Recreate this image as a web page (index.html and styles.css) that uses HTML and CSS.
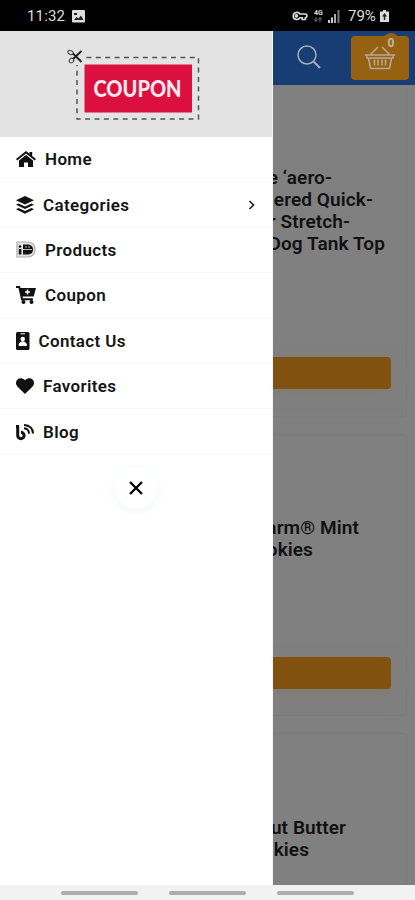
FILE: index.html
```html
<!DOCTYPE html>
<html lang="en">
<head>
<meta charset="utf-8">
<meta name="viewport" content="width=device-width, initial-scale=1">
<title>Coupon</title>
<link rel="stylesheet" href="styles.css">
</head>
<body>
<div class="phone">
  <header class="status">
    <span class="clock">11:32</span>
    <svg class="photo" width="13" height="13" viewBox="0 0 13 13"><rect width="13" height="12.5" rx="1" fill="#ddd"/><path d="M2 10l2.500-3 2 1.500L9 5.500l2.500 4.500zM2 3h3v2H2z" fill="#222"/></svg>
    <svg class="key" width="16" height="10" viewBox="0 0 16 10" fill="none" stroke="#ddd" stroke-width="1.600"><path d="M8 3C6.500.5 1.200.8 1.200 5S6.500 9.300 8 6.700h2.200V8.500h3.200V6.700c2 0 2-3.700 0-3.700z"/><circle cx="4.500" cy="4.900" r="1"/></svg>
    <span class="net"><b>4G</b><svg width="8" height="5" viewBox="0 0 8 5" stroke="#777" fill="none"><path d="M2 0v4M.5 2.500L2 4.500l1.500-2M6 5V1M4.500 2.500L6 .5l1.500 2"/></svg></span>
    <svg class="signal" width="12" height="13" viewBox="0 0 12 13"><path d="M0 10h2v3H0zM3 7.500h2V13H3z" fill="#ccc"/><path d="M6 4h2v9H6z" fill="#aaa"/><path d="M9.500 0h2v13h-2z" fill="#777"/></svg>
    <span class="percent">79%</span>
    <svg class="battery" width="9" height="12" viewBox="0 0 9 12"><path d="M3 0h3v1.500h3V12H0V1.500h3z" fill="#ddd"/><path d="M4.500 3L2 6.500h1.800V10h1.500V6.500H7z" fill="#222"/></svg>
  </header>
  <div class="screen">
    <aside class="drawer">
      <div class="brand">
        <svg width="136" height="76" viewBox="0 0 136 76">
          <rect x="13" y="11.500" width="121.500" height="61.500" fill="none" stroke="#555" stroke-width="1.500" stroke-dasharray="5 4.400"/>
          <rect x="2" y="2" width="17" height="17" fill="#e3e3e3"/>
          <g fill="none" stroke="#555" stroke-width="1.200"><ellipse cx="6.500" cy="6.500" rx="2.800" ry="1.900" transform="rotate(25 6.500 6.500)"/><ellipse cx="7.500" cy="14.500" rx="2.500" ry="2" transform="rotate(-50 7.500 14.500)"/><path d="M9 7.500l8.500 8.500M9 13L17.500 5" stroke="#222" stroke-width="2"/></g>
          <rect x="20.500" y="18.500" width="107.500" height="48" fill="#dc103f"/>
          <text x="29.500" y="50.500" textLength="88" lengthAdjust="spacingAndGlyphs">COUPON</text>
        </svg>
      </div>
      <nav>
        <a class="item"><svg width="20" height="17" viewBox="0 0 20 17"><path d="M0 8L10 0l3.500 2.800V1h2.700v4L20 8l-1.200 1.500L10 2.600 1.200 9.500z"/><path d="M10 4l7 5.600V16h-5v-4.500H8V16H3V9.600z"/></svg><span>Home</span></a>
        <a class="item"><svg width="18" height="18" viewBox="0 0 18 18"><path d="M9 0l9 4.300-9 4.200-9-4.200z"/><path d="M0 8.700l2.600-1.200L9 10.400l6.400-2.900L18 8.700 9 13z"/><path d="M0 13.300l2.600-1.200L9 15l6.400-2.900 2.600 1.200-9 4.400z"/></svg><span>Categories</span><svg class="chevron" width="7" height="10" viewBox="0 0 7 10"><path d="M1.500 1l4 4-4 4" fill="none" stroke="#222" stroke-width="1.700"/></svg></a>
        <a class="item"><svg width="20" height="17" viewBox="0 0 20 17"><path d="M1 1h10c5.500 0 8 3 8 7.500S16.500 16 11 16H1z" fill="#e4e4e4" stroke="#aaa" stroke-width="1.200"/><circle cx="4" cy="5.500" r="1.300"/><path d="M2.800 8h2.600v5.500H2.800zM7 3.500h4c4 0 6 2 6 5s-2 5-6 5H7z"/><path d="M7 8.500h9M10 5v2M13 5v2" stroke="#bbb"/></svg><span>Products</span></a>
        <a class="item"><svg width="20" height="18" viewBox="0 0 20 18"><path d="M0 0h4l.5 2H20l-2.300 8.500H6.500l.4 1.700h10v2H5.200L2.500 2H0z"/><circle cx="7.500" cy="16" r="2"/><circle cx="15.500" cy="16" r="2"/><path d="M11.500 3.500v5M9 6h5" stroke="#fff" stroke-width="1.500"/></svg><span>Coupon</span></a>
        <a class="item"><svg width="13.500" height="18" viewBox="0 0 13.500 18"><rect width="13.500" height="18" rx="1.500"/><path d="M4.500 1.800h4.500M3 13.500c0-5 7.500-5 7.500 0z" stroke="#fff" fill="#fff"/><circle cx="6.750" cy="7" r="2.300" fill="#fff"/></svg><span>Contact Us</span></a>
        <a class="item"><svg width="18" height="16" viewBox="0 0 18 16"><path d="M9 16L1.400 8.500C-2.800 4 3-3.200 9 2.200c6-5.400 11.800 1.800 7.600 6.300z"/></svg><span>Favorites</span></a>
        <a class="item"><svg width="18" height="18" viewBox="0 0 18 18" fill="none" stroke="#111"><path d="M0 3.500h1.700v9a3.200 3.200 0 1 0 3.200-3.200" stroke-width="3"/><path d="M8 5.200c3.500.3 5 2.500 5 5.500M8 2c5.500.3 8.800 3.500 9 8.500" stroke-width="2"/></svg><span>Blog</span></a>
      </nav>
      <button class="close" aria-label="Close"><svg width="14" height="14" viewBox="0 0 14 14"><path d="M1 1l12 12M13 1L1 13" stroke="#000" stroke-width="2.300"/></svg></button>
    </aside>
    <main class="page">
      <div class="topbar">
        <svg class="search" width="24" height="24" viewBox="0 0 24 24" fill="none" stroke="#a9adb5" stroke-width="1.500"><circle cx="10" cy="10" r="9"/><path d="M16.500 16.500L23 23" stroke-width="2"/></svg>
        <div class="cart"><svg width="30" height="24" viewBox="0 0 30 24" fill="none" stroke="#b5aa97" stroke-width="1.500"><path d="M0 9h30M2 9v3h26V9M3.500 12l2 10.500h19l2-10.500M5 9L13 1M25 9L17 1M9.500 13.500v6M13 13.500v6M17 13.500v6M20.500 13.500v6"/></svg><span class="badge">0</span></div>
      </div>
      <div class="products">
        <section class="card first"><h2><span class="a1">e ‘aero-</span><span class="a2">ered Quick-</span><span class="a3">r Stretch-</span><span class="a4">Dog Tank Top</span></h2><div class="buy"></div></section>
        <section class="card second"><h2><span class="b1">arm® Mint</span><span class="b2">okies</span></h2><div class="buy"></div></section>
        <section class="card third"><h2><span class="c1">ut Butter</span><span class="c2">kies</span></h2></section>
      </div>
    </main>
  </div>
  <footer class="gestures"><i></i><i></i><i></i></footer>
</div>
</body>
</html>
```
FILE: styles.css
```css
* { box-sizing: border-box; }
body { margin: 0; font-family: Roboto, sans-serif; color: #151515; }
svg { display: block; flex: none; }
.phone { width: 415px; height: 900px; display: flex; flex-direction: column; overflow: hidden; }
.status { height: 31px; flex: none; background: #000; color: #ddd; display: flex; align-items: center; padding: 1px 26px 0 27px; }
.clock { font-size: 15px; width: 38px; margin-right: 7px; letter-spacing: .15px; }
.key { margin-left: auto; }
.net { margin-left: 6px; width: 9px; font: 7px/7px Roboto, sans-serif; }
.net b { display: block; }
.signal { margin-left: 5px; }
.percent { margin-left: 8px; font-size: 15px; width: 29px; }
.battery { margin-left: 3px; }
.screen { flex: 1; display: flex; min-height: 0; }
.drawer { width: 273px; flex: none; background: #fff; display: flex; flex-direction: column; border-right: 1px solid #f5f5f5; }
.brand { height: 106px; background: #e3e3e3; padding: 15px 0 0 64px; }
.brand text { font: 900 22px Lato, sans-serif; fill: #fbe8ec; }
nav { display: flex; flex-direction: column; }
.item { height: 45.4px; display: flex; align-items: center; gap: 9px; padding: 0 17px 0 16px; border-bottom: 1px solid #f9f9f9; font-size: 17px; font-weight: 600; fill: #111; }
.item span { letter-spacing: .35px; }
.chevron { margin-left: auto; }
.close { width: 42px; height: 42px; border: 0; padding: 0; border-radius: 50%; background: #fff; box-shadow: 0 2px 12px #f0f6f6; display: grid; place-items: center; margin: 12px auto 0; }
.page { flex: 1; min-width: 0; background: #808080; display: flex; flex-direction: column; overflow: hidden; }
.topbar { height: 54px; flex: none; background: #183d75; display: flex; align-items: center; padding: 0 6px 0 24px; }
.search { margin-top: -3px; }
.cart { position: relative; width: 58px; height: 44px; margin: 0 0 0 auto; background: #966212; border-radius: 4px; display: grid; place-items: center; }
.badge { position: absolute; right: 10px; top: -3px; width: 16px; height: 16px; border-radius: 8px; background: #966212; color: #c2b59f; font: 700 12px/20px Roboto, sans-serif; text-align: center; }
.products { flex: 1; display: flex; flex-direction: column; gap: 17px; padding-right: 8px; }
.card { border: 1px solid #7c7c7c; border-left: 0; border-radius: 0 4px 4px 0; padding-right: 15px; }
.first { height: 332px; border-top: 0; }
.second { height: 282px; }
.third { flex: 1; border-bottom: 0; }
h2 { margin: 0; font-size: 19px; line-height: 22px; font-weight: 600; letter-spacing: .1px; color: #101010; }
h2 span { display: flex; justify-content: flex-end; white-space: nowrap; }
.first h2 { padding-top: 82px; }
.second h2 { padding-top: 82px; }
.third h2 { padding-top: 83px; }
.a1 { padding-right: 59px; }
.a2 { padding-right: 18px; }
.a3 { padding-right: 41px; }
.a4 { padding-right: 6px; }
.b1 { padding-right: 32px; }
.b2 { padding-right: 78px; }
.c1 { padding-right: 45px; }
.c2 { padding-right: 82px; }
.buy { height: 32px; border-radius: 0 4px 4px 0; background: #815110; box-shadow: 0 5px 16px #7e776780; }
.first .buy { margin-top: 102px; }
.second .buy { margin-top: 96px; }
.gestures { height: 15px; flex: none; background: #f2f2f2; display: flex; gap: 31px; padding: 6px 0 0 61px; }
.gestures i { width: 77px; height: 4px; border-radius: 2px; background: #adadad; }
```
